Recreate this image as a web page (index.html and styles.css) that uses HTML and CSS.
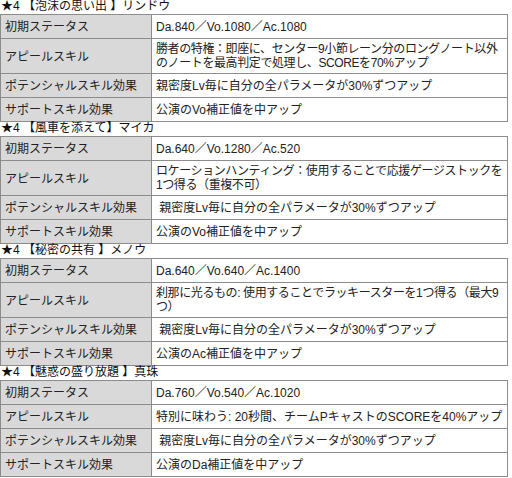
FILE: index.html
```html
<!DOCTYPE html>
<html lang="ja">
<head>
<meta charset="utf-8">
<link rel="stylesheet" href="styles.css">
</head>
<body>
<div class="title">★4 【泡沫の思い出 】リンドウ</div>
<table>
<tr><td class="k">初期ステータス</td><td>Da.840／Vo.1080／Ac.1080</td></tr>
<tr><td class="k">アピールスキル</td><td class="two">勝者の特権：即座に、センター9小節レーン分のロングノート以外<br>のノートを最高判定で処理し、SCOREを70%アップ</td></tr>
<tr><td class="k">ポテンシャルスキル効果</td><td>親密度Lv毎に自分の全パラメータが30%ずつアップ</td></tr>
<tr><td class="k">サポートスキル効果</td><td>公演のVo補正値を中アップ</td></tr>
</table>
<div class="title">★4 【風車を添えて】マイカ</div>
<table>
<tr><td class="k">初期ステータス</td><td>Da.640／Vo.1280／Ac.520</td></tr>
<tr><td class="k">アピールスキル</td><td class="two">ロケーションハンティング：使用することで応援ゲージストックを<br>1つ得る（重複不可）</td></tr>
<tr><td class="k">ポテンシャルスキル効果</td><td>&nbsp;親密度Lv毎に自分の全パラメータが30%ずつアップ</td></tr>
<tr><td class="k">サポートスキル効果</td><td>公演のVo補正値を中アップ</td></tr>
</table>
<div class="title">★4 【秘密の共有 】メノウ</div>
<table>
<tr><td class="k">初期ステータス</td><td>Da.640／Vo.640／Ac.1400</td></tr>
<tr><td class="k">アピールスキル</td><td class="two">刹那に光るもの: 使用することでラッキースターを1つ得る（最大9<br>つ）</td></tr>
<tr><td class="k">ポテンシャルスキル効果</td><td>&nbsp;親密度Lv毎に自分の全パラメータが30%ずつアップ</td></tr>
<tr><td class="k">サポートスキル効果</td><td>公演のAc補正値を中アップ</td></tr>
</table>
<div class="title">★4 【魅惑の盛り放題 】真珠</div>
<table>
<tr><td class="k">初期ステータス</td><td>Da.760／Vo.540／Ac.1020</td></tr>
<tr><td class="k">アピールスキル</td><td>特別に味わう: 20秒間、チームPキャストのSCOREを40%アップ</td></tr>
<tr><td class="k">ポテンシャルスキル効果</td><td>&nbsp;親密度Lv毎に自分の全パラメータが30%ずつアップ</td></tr>
<tr><td class="k">サポートスキル効果</td><td>公演のDa補正値を中アップ</td></tr>
</table>
</body>
</html>
```
FILE: styles.css
```css
body {
  margin: 0;
  background: #ffffff;
  font-family: "Liberation Sans", "Noto Sans CJK JP", sans-serif;
  font-size: 12px;
  color: #222222;
}
.title {
  height: 14px;
  line-height: 13px;
  padding-left: 1px;
  color: #111111;
}
table {
  border-collapse: collapse;
  width: 508px;
  table-layout: fixed;
}
td {
  border: 1px solid #8c8c8c;
  padding: 3px 4px 2px;
  height: 18px;
  line-height: 14px;
  vertical-align: middle;
  white-space: nowrap;
  overflow: hidden;
}
td.two {
  letter-spacing: -0.4px;
  padding-bottom: 3px;
}
td.k {
  width: 142px;
  background: #d9d9d9;
}
```
